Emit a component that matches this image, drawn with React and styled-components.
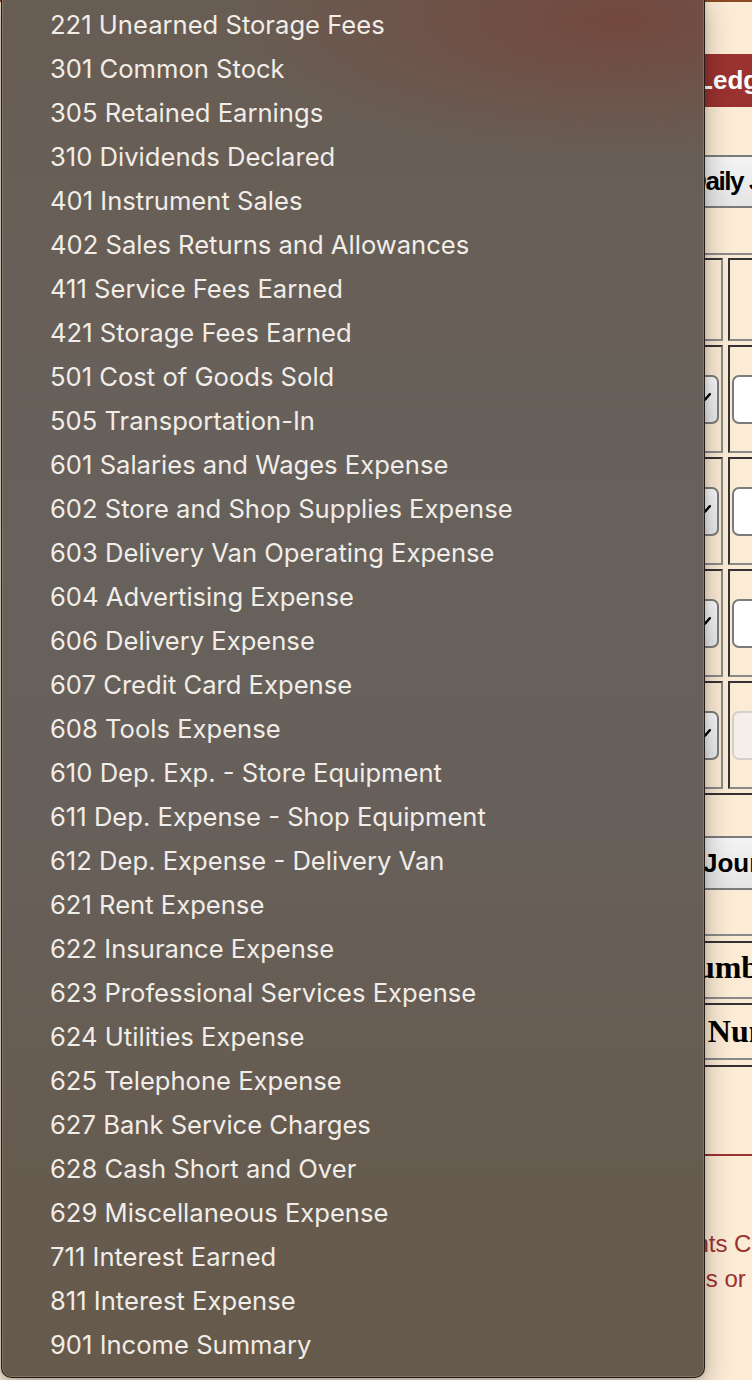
import React from "react";
import styled, { createGlobalStyle } from "styled-components";

const GlobalStyle = createGlobalStyle`
  html, body {
    margin: 0;
    padding: 0;
    overflow: hidden;
    background: #fcebd5;
  }
  body {
    font-family: "Liberation Sans", Arial, sans-serif;
  }
`;

const Page = styled.div`
  position: relative;
  width: 752px;
  height: 1380px;
  overflow: hidden;
  background: #fcebd5;
  display: flex;
  flex-direction: column;
  align-items: flex-start;
`;

const TopStrip = styled.div`
  width: 100%;
  height: 2px;
  flex: none;
  background: #8a4a22;
`;

const TitleBar = styled.h1`
  box-sizing: border-box;
  margin: 52px 0 0 16px;
  width: 1000px;
  height: 53px;
  flex: none;
  display: flex;
  align-items: center;
  padding-left: 577px;
  background: #9a3230;
  color: #ffffff;
  font: bold 26px "Liberation Sans", Arial, sans-serif;
  white-space: nowrap;
`;

const BarButton = styled.button`
  box-sizing: border-box;
  flex: none;
  margin: ${(p) => p.$top}px 0 0 ${(p) => p.$left}px;
  height: ${(p) => p.$height}px;
  padding: 0 40px 0 ${(p) => p.$pad}px;
  border: 2px solid #7b7b7b;
  border-radius: 0;
  background: linear-gradient(180deg, #f3f3f3 0%, #e5e5e5 100%);
  color: #000;
  font: bold 26px "Liberation Sans", Arial, sans-serif;
  letter-spacing: ${(p) => p.$tight || 0}px;
  white-space: nowrap;
  text-align: left;
`;

const EntryGrid = styled.div`
  flex: none;
  margin: 45px 0 0 16px;
  border: 2px solid;
  border-color: #8a8a8a #333 #333 #8a8a8a;
  padding: 3px 5px 4px;
  display: grid;
  grid-template-columns: 160px 535px 190px 190px;
  grid-template-rows: 83px repeat(4, 108px);
  column-gap: 5px;
  row-gap: 4px;
`;

const Cell = styled.div`
  box-sizing: border-box;
  border: 2px solid;
  border-color: #333 #8a8a8a #8a8a8a #333;
  padding: 2px;
  display: flex;
  align-items: center;
  justify-content: ${(p) => (p.$center ? "center" : "flex-start")};
  font: bold 22px "Liberation Serif", "Times New Roman", serif;
  color: #000;
  white-space: nowrap;
`;

const SelectBox = styled.div`
  box-sizing: border-box;
  width: 100%;
  height: 49px;
  border: 2px solid #7d7d7d;
  border-radius: 7px;
  background: linear-gradient(180deg, #fbfbfb 0%, #e8e8e8 100%);
  display: flex;
  align-items: center;
  justify-content: space-between;
  padding: 0 6px 0 12px;
  font: 22px "Liberation Sans", Arial, sans-serif;
  color: #000;
`;

const Chevron = styled.svg`
  width: 12px;
  height: 8px;
  margin-bottom: 4px;
  flex: none;
`;

const TextInput = styled.div`
  box-sizing: border-box;
  width: 100%;
  height: 49px;
  border: 2px solid ${(p) => (p.$disabled ? "#d4d0ca" : "#7b7b7b")};
  border-radius: 7px;
  background: ${(p) => (p.$disabled ? "#f4efe9" : "#ffffff")};
`;

const LedgerTable = styled.div`
  flex: none;
  margin: 44px 0 0 16px;
  width: 1000px;
  border: 2px solid;
  border-color: #8a8a8a #333 #333 #8a8a8a;
  padding: 5px;
  display: grid;
  grid-template-rows: 58px 57px;
  row-gap: 4px;
`;

const LedgerRow = styled.div`
  box-sizing: border-box;
  border: 2px solid;
  border-color: #333 #8a8a8a #8a8a8a #333;
  display: flex;
  align-items: center;
  padding: 0 0 ${(p) => p.$lift}px ${(p) => p.$indent}px;
  font: bold 32px "Liberation Serif", "Times New Roman", serif;
  color: #000;
  white-space: nowrap;
`;

const RedRule = styled.div`
  flex: none;
  margin: 87px 0 0 16px;
  width: 1000px;
  height: 2px;
  background: #9a3230;
`;

const Note = styled.div`
  flex: none;
  margin-top: 70px;
  display: flex;
  flex-direction: column;
`;

const NoteLine = styled.p`
  margin: 0;
  padding-left: ${(p) => p.$indent}px;
  font: 24px/35px "Liberation Sans", Arial, sans-serif;
  color: #9a3230;
  white-space: nowrap;
`;

const Menu = styled.div`
  position: absolute;
  left: 1px;
  top: -9px;
  width: 704px;
  box-sizing: border-box;
  padding: 10px 0 11px;
  border: 1px solid rgba(25, 18, 12, 0.85);
  border-radius: 10px;
  background:
    radial-gradient(ellipse 55% 10% at 88% 2%, rgba(125, 55, 45, 0.55), rgba(125, 55, 45, 0) 100%),
    linear-gradient(180deg, #685d53 0%, #67615c 40%, #67605a 60%, #665b4f 85%, #665a4c 100%);
  box-shadow:
    inset 0 0 0 1px rgba(255, 255, 255, 0.16),
    0 10px 28px rgba(0, 0, 0, 0.28),
    0 0 6px rgba(0, 0, 0, 0.15);
  display: flex;
  flex-direction: column;
`;

const MenuItem = styled.div`
  height: 44px;
  display: flex;
  align-items: center;
  padding-left: 48px;
  font: 400 25.6px "Inter", "Noto Sans", sans-serif;
  color: #f1ede8;
  white-space: nowrap;
`;

const accounts = [
  "221 Unearned Storage Fees",
  "301 Common Stock",
  "305 Retained Earnings",
  "310 Dividends Declared",
  "401 Instrument Sales",
  "402 Sales Returns and Allowances",
  "411 Service Fees Earned",
  "421 Storage Fees Earned",
  "501 Cost of Goods Sold",
  "505 Transportation-In",
  "601 Salaries and Wages Expense",
  "602 Store and Shop Supplies Expense",
  "603 Delivery Van Operating Expense",
  "604 Advertising Expense",
  "606 Delivery Expense",
  "607 Credit Card Expense",
  "608 Tools Expense",
  "610 Dep. Exp. - Store Equipment",
  "611 Dep. Expense - Shop Equipment",
  "612 Dep. Expense - Delivery Van",
  "621 Rent Expense",
  "622 Insurance Expense",
  "623 Professional Services Expense",
  "624 Utilities Expense",
  "625 Telephone Expense",
  "627 Bank Service Charges",
  "628 Cash Short and Over",
  "629 Miscellaneous Expense",
  "711 Interest Earned",
  "811 Interest Expense",
  "901 Income Summary",
];

const ChevronIcon = () => (
  <Chevron viewBox="0 0 12 8" aria-hidden="true">
    <path d="M1.2 1.2 L6 6.6 L10.8 1.2" fill="none" stroke="#000" strokeWidth="2.4" strokeLinecap="round" strokeLinejoin="round" />
  </Chevron>
);

const rows = [0, 1, 2, 3];

export default function App() {
  return (
    <>
      <GlobalStyle />
      <Page>
        <TopStrip />
        <TitleBar>General Ledger</TitleBar>
        <BarButton $top={48} $left={640} $height={53} $pad={46} $tight={-1.4}>Daily Journal</BarButton>
        <EntryGrid>
          <Cell $center>Date</Cell>
          <Cell $center>Account</Cell>
          <Cell />
          <Cell />
          {rows.map((r) => (
            <React.Fragment key={r}>
              <Cell>
                <TextInput $disabled={r === 3} />
              </Cell>
              <Cell>
                <SelectBox>
                  <span />
                  <ChevronIcon />
                </SelectBox>
              </Cell>
              <Cell>
                <TextInput $disabled={r === 3} />
              </Cell>
              <Cell>
                <TextInput $disabled={r === 3} />
              </Cell>
            </React.Fragment>
          ))}
        </EntryGrid>
        <BarButton $top={41} $left={650} $height={54} $pad={51}>Journalize</BarButton>
        <LedgerTable>
          <LedgerRow $indent={527} $lift={6}>Account Number</LedgerRow>
          <LedgerRow $indent={561} $lift={0}>Account Number: 101</LedgerRow>
        </LedgerTable>
        <RedRule />
        <Note>
          <NoteLine $indent={538}>Chart of Accounts Cheat Sheet</NoteLine>
          <NoteLine $indent={555}>account names or numbers.</NoteLine>
        </Note>
        <Menu role="listbox">
          {accounts.map((a) => (
            <MenuItem key={a} role="option">{a}</MenuItem>
          ))}
        </Menu>
      </Page>
    </>
  );
}
